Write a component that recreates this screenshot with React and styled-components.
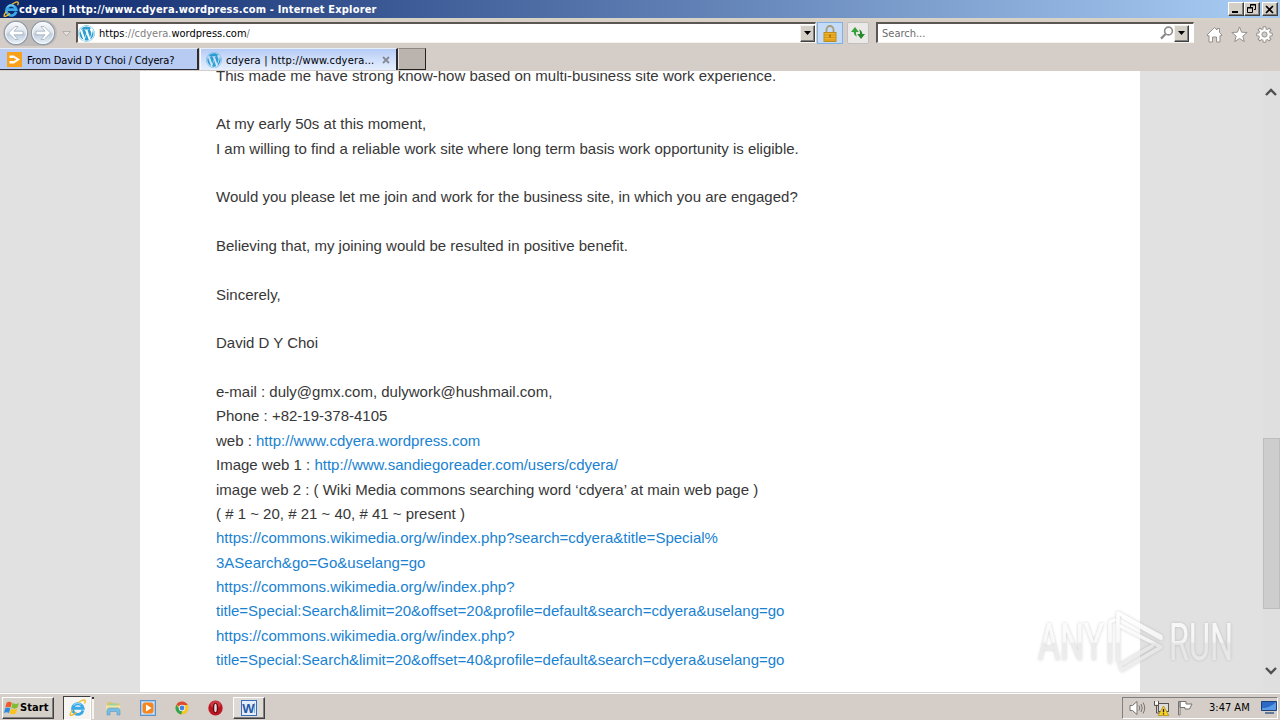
import React from "react";
import styled, { createGlobalStyle, css } from "styled-components";
import { FaWordpress } from "react-icons/fa";

const GlobalStyle = createGlobalStyle`
  * {
    box-sizing: border-box;
  }

  body {
    margin: 0;
    overflow: hidden;
    background: #d4d0c8;
  }

  svg {
    display: block;
    flex: none;
  }
`;

const uiFont = css`
  font-family: "DejaVu Sans Condensed", "DejaVu Sans", Tahoma, sans-serif;
  font-stretch: condensed;
  font-size: 11px;
  line-height: 14px;
  white-space: pre;
`;

const Desktop = styled.div`
  width: 1280px;
  height: 720px;
  display: flex;
  flex-direction: column;
  position: relative;
  overflow: hidden;
  background: #d4cdc8;
  color: #000;
`;

const Label = styled.span`
  ${uiFont}
  flex: none;
  font-weight: ${(p) => (p.$bold ? 700 : 400)};
  letter-spacing: ${(p) => p.$spacing || 0}px;
  color: ${(p) => p.$color || "#000"};
`;

/* Title bar */

const TitleBar = styled.header`
  height: 18px;
  flex: none;
  display: flex;
  align-items: center;
  padding: 0 2px 0 3px;
  background: linear-gradient(90deg, #0b266b 0%, #a3c7ef 96%);
`;

const TitleText = styled(Label)`
  padding-top: 1px;
  flex: 1;
`;

const WindowButton = styled.button`
  width: 16px;
  height: 14px;
  padding: 0;
  margin-left: ${(p) => p.$gap || 0}px;
  display: flex;
  align-items: center;
  justify-content: center;
  background: #d4d0c8;
  border: 1px solid;
  border-color: #fff #404040 #404040 #fff;
  box-shadow: inset -1px -1px 0 #808080;
`;

/* Navigation bar */

const NavBar = styled.nav`
  height: 30px;
  flex: none;
  display: flex;
  align-items: flex-start;
  padding: 2px 7px 0 3px;
  background: linear-gradient(#d8d3c6 0, #d4cdc8 5px);
`;

const HistoryButtons = styled.div`
  display: flex;
  width: 54px;
  height: 26px;
  border-radius: 13px;
  background: #bfbcba;
`;

const HistoryMenu = styled.div`
  width: 19px;
  height: 28px;
  display: flex;
  align-items: center;
  justify-content: center;
`;

const Field = styled.div`
  width: ${(p) => p.$width}px;
  height: 21px;
  margin: 2px 0 0 ${(p) => p.$left}px;
  display: flex;
  align-items: center;
  background: #fff;
  border: 1px solid;
  border-width: 2px 1px 1px 2px;
  border-color: #5c5752 #fff #f5f2ee #5c5752;
`;

const FieldText = styled.div`
  display: flex;
  flex: 1;
  margin-left: 4px;
  padding-top: 2px;
`;

const DropButton = styled.button`
  width: 15px;
  height: 17px;
  padding: 0;
  display: flex;
  align-items: center;
  justify-content: center;
  background: #d4d0c8;
  border: 1px solid;
  border-color: #f4f2ee #404040 #404040 #f4f2ee;
  box-shadow: inset -1px -1px 0 #808080;
`;

const AddressButton = styled.button`
  width: ${(p) => p.$width}px;
  height: 22px;
  padding: 0;
  margin: 2px 0 0 ${(p) => p.$left}px;
  display: flex;
  align-items: center;
  justify-content: center;
  border: 1px solid ${(p) => (p.$active ? "#7fb0e6" : "#c2c0be")};
  border-radius: ${(p) => (p.$active ? 0 : 2)}px;
  background: ${(p) => (p.$active ? "#c4dcf8" : "#ebe9e8")};
`;

const Tools = styled.div`
  display: flex;
  gap: 8px;
  margin: 6px 0 0 auto;
`;

/* Tabs */

const TabStrip = styled.div`
  height: 23px;
  flex: none;
  display: flex;
  align-items: flex-start;
`;

const Tab = styled.div`
  width: ${(p) => p.$width}px;
  height: 22px;
  margin-left: ${(p) => (p.$active ? 1 : 0)}px;
  display: flex;
  align-items: center;
  padding: 1px 6px 0 ${(p) => (p.$active ? 5 : 7)}px;
  border: solid #2b2b33;
  border-width: 0 2px ${(p) => (p.$active ? 0 : 1)}px 0;
  border-top: 1px solid #e8eef8;
  border-left: ${(p) => (p.$active ? "1px solid #f6f9ff" : 0)};
  background: ${(p) =>
    p.$active
      ? "linear-gradient(#b5cbf5 0, #c8d9f9 35%, #e6effe 100%)"
      : "#b8cbf3"};

  span {
    margin-left: ${(p) => (p.$active ? 4 : 5)}px;
    padding-top: 2px;
  }
`;

const CloseGlyph = styled.svg`
  margin-left: auto;
`;

const NewTab = styled.div`
  width: 28px;
  height: 22px;
  background: #bab3ae;
  border: 1px solid;
  border-color: #8f8984 #222 #222 #e6e0dc;
`;

/* Page */

const Viewport = styled.main`
  height: 621px;
  flex: none;
  display: flex;
  background: #e1e1e1;
  overflow: hidden;
`;

const Article = styled.article`
  width: 1000px;
  margin-left: 140px;
  padding: 0 340px 0 76px;
  background: #fff;
`;

const Letter = styled.div`
  margin-top: -7.33px;
  font-family: "Liberation Sans", Arial, sans-serif;
  font-size: 15px;
  line-height: 24.35px;
  color: #373737;
  white-space: pre;
`;

const Line = styled.div`
  height: 24.35px;
`;

const Link = styled.a`
  color: #1982d1;
`;

const ScrollTrack = styled.div`
  width: 17px;
  margin-left: auto;
  display: flex;
  flex-direction: column;
  align-items: center;
  background: #dfdfdf;
  padding: 17px 0 17px;
`;

const ScrollThumb = styled.div`
  width: 17px;
  height: 171px;
  margin: 342px 0 auto;
  background: #cdcdcd;
  border: 1px solid #bdbdbd;
`;

/* Taskbar */

const Taskbar = styled.footer`
  height: 28px;
  flex: none;
  display: flex;
  align-items: center;
  padding: 2px 0 0 2px;
  background: #d4cdc8;
  border-top: 1px solid #d9d4cf;
  box-shadow: inset 0 1px 0 #fff;
`;

const StartButton = styled.button`
  width: 52px;
  height: 22px;
  padding: 0 0 0 1px;
  display: flex;
  align-items: center;
  background: #d4d0c8;
  border: 1px solid;
  border-color: #fff #404040 #404040 #fff;
  box-shadow: inset -1px -1px 0 #808080;
`;

const QuickItem = styled.div`
  width: 33px;
  height: 24px;
  margin-right: 1px;
  display: flex;
  align-items: center;
  justify-content: center;
  border: 1px solid transparent;

  ${(p) =>
    p.$state === "pressed" &&
    css`
      width: 28px;
      margin: 0 5px 0 9px;
      background: #f6f5f2;
      border-color: #404040 #fff #fff #404040;
    `}

  ${(p) =>
    p.$state === "raised" &&
    css`
      width: 32px;
      height: 22px;
      background: #dedad5;
      border-color: #fff #404040 #404040 #fff;
      box-shadow: inset -1px -1px 0 #808080;
    `}
`;

const PressedEdge = styled.i`
  width: 2px;
  height: 22px;
  margin: 0 3px 0 -4px;
  background: #f6f5f2;
  border-top: 2px solid #333;
`;

const Tray = styled.div`
  height: 22px;
  margin-left: auto;
  width: 156px;
  margin-right: 2px;
  display: flex;
  align-items: center;
  padding-left: 6px;
  gap: 7px;
  border: 1px solid;
  border-color: #808080 #fff #fff #808080;
`;

const Clock = styled(Label)`
  margin: 0 auto 0 8px;
`;

const Watermark = styled.svg`
  position: absolute;
  left: 1028px;
  top: 602px;
  pointer-events: none;
`;

const Arrow = ({ color = "#000" }) => (
  <svg width="7" height="4" viewBox="0 0 7 4">
    <path d="M0 0h7L3.5 4z" fill={color} />
  </svg>
);

const Explorer = ({ size }) => (
  <svg width={size} height={size} viewBox="0 0 16 16" fill="none">
    <path
      d="M13.2 10.700A5 5 0 1 1 13.300 8.700H4.500"
      stroke="#39a9e8"
      strokeWidth="2.700"
    />
    <path d="M4.200 6.200a4.400 4.400 0 0 1 7-.9" stroke="#8cd8fb" strokeWidth="1" />
    <path
      d="M3.400 10.300C.6 14 .4 16 2.400 15.400c1.600-.4 3.300-1.700 4.600-2.800M9 3.300C12 1 14.700.2 15.200 1.400c.3.8-.1 1.800-.6 2.800"
      stroke="#f0bd2c"
      strokeWidth="1.300"
    />
  </svg>
);

const RoundArrow = ({ flip }) => (
  <svg width="27" height="26" viewBox="0 0 27 26">
    <defs>
      <linearGradient id="glass" x1="0" y1="0" x2="0" y2="1">
        <stop offset="0" stopColor="#fbfcfd" />
        <stop offset=".48" stopColor="#dce2ea" />
        <stop offset=".55" stopColor="#bfcddd" />
        <stop offset="1" stopColor="#edf5fb" />
      </linearGradient>
    </defs>
    <circle cx="13" cy="13" r="11.600" fill="url(#glass)" stroke="#929daa" strokeWidth="1.300" />
    <circle cx="13" cy="13" r="10.500" fill="none" stroke="#f7fafc" />
    <path
      transform={flip ? "translate(26 0) scale(-1 1)" : undefined}
      d="M5.500 13l6.500-6.500h3l-4 4.700h9v3.600h-9l4 4.700h-3z"
      fill="#fff"
      stroke="#9eaec0"
      strokeWidth=".8"
    />
  </svg>
);

const Lock = () => (
  <svg width="14" height="17" viewBox="0 0 14 17">
    <path d="M3.500 8V4.500a3.500 3.500 0 0 1 7 0V8" fill="none" stroke="#a79c78" strokeWidth="1.800" />
    <rect x="1" y="7.500" width="12" height="9" fill="#f0b323" stroke="#b98c22" />
    <path d="M1.500 10h11M1.500 12.500h11M1.500 15h11" stroke="#c98a16" strokeWidth=".8" />
    <path d="M7 9.500v3" stroke="#8a6212" strokeWidth="1.200" />
  </svg>
);

const Refresh = () => (
  <svg width="16" height="14" viewBox="0 0 16 14">
    <path d="M5 1L1 6h2.700c.2 2.500 1.300 4 3.500 4.500C6 9 5.900 7.600 6.100 6h2.700z" fill="#36a03b" />
    <path d="M11 13l4-5h-2.700c-.2-2.500-1.300-4-3.500-4.500C10 5 10.100 6.400 9.900 8H7.200z" fill="#278a2d" />
  </svg>
);

const Magnifier = () => (
  <svg width="14" height="14" viewBox="0 0 14 14" fill="none" stroke="#8d8a88">
    <circle cx="8.500" cy="5" r="3.900" strokeWidth="1.600" />
    <path d="M5.600 8L1 12.600" strokeWidth="2.300" />
  </svg>
);

const toolProps = {
  width: 17,
  height: 17,
  viewBox: "0 0 17 17",
  fill: "#fff",
  stroke: "#96918e",
  strokeLinejoin: "round",
};

const Home = () => (
  <svg {...toolProps}>
    <path d="M1 9l7.500-7.500L11 4V2.500h2.500v4L16 9l-1 1.300-1-.8V16h-3.500v-5h-4v5H3V9.500l-1 .8z" />
  </svg>
);

const Star = () => (
  <svg {...toolProps}>
    <path d="M8.500.9l2.100 5.300 5.600.3-4.400 3.600 1.500 5.500-4.800-3.100-4.800 3.100 1.500-5.500L.8 6.500l5.600-.3z" />
  </svg>
);

const teeth = [0, 45, 90, 135, 180, 225, 270, 315];

const Gear = () => (
  <svg {...toolProps}>
    {teeth.map((angle) => (
      <path
        key={angle}
        d="M6.800 4L7.200.7h2.600l.4 3.300"
        transform={`rotate(${angle} 8.500 8.500)`}
      />
    ))}
    <circle cx="8.500" cy="8.500" r="5.300" stroke="none" />
    <circle cx="8.500" cy="8.500" r="2.600" fill="#d4cdc8" />
  </svg>
);

const FeedLogo = () => (
  <svg width="15" height="15" viewBox="0 0 15 15">
    <rect width="15" height="15" fill="#f9a11b" />
    <path d="M2.500 3.500h4.300l6.200 4-6.200 4H2.500V9H6V6H2.500z" fill="#fff" />
    <path d="M6 5.500l3.500 2L6 9.500z" fill="#f9a11b" />
  </svg>
);

const WindowsFlag = () => (
  <svg width="16" height="16" viewBox="0 0 16 16">
    <path d="M2.600 2.700c2-1.300 3.500-1 5.200 0L6.500 7.400C4.700 6.500 3.300 6.300 1.300 7.500z" fill="#ef5a28" />
    <path d="M8.500 3.100c2 1.100 4.200 1.200 6.500-.2l-1.400 4.700c-2 1.400-4.200 1.300-6.300.2z" fill="#80bd35" />
    <path d="M1.100 8.300c2-1.200 3.400-1.100 5.200-.1L5 13c-1.800-1-3.300-1.100-5 .1z" fill="#2d8ce0" />
    <path d="M7 8.600c2 1.100 4 1.200 6.300-.1L12 13.200c-2.200 1.400-4.200 1.300-6.300.2z" fill="#fac21a" />
  </svg>
);

const FolderIcon = () => (
  <svg width="17" height="16" viewBox="0 0 17 16">
    <path d="M2 3l1-1h4l1 1.500h6.500V10H2z" fill="#dfc46c" />
    <path d="M4 3.500h8v3H4z" fill="#9bd2a1" />
    <path d="M1 5.500h14l.5 5H1z" fill="#f5e3a0" />
    <path d="M2 15v-4.500C2 9 3 8 4.500 8h8C14 8 15 9 15 10.500V15h-3v-3.500H5V15z" fill="#78bde2" stroke="#5b9cc5" strokeWidth=".6" />
  </svg>
);

const MediaIcon = () => (
  <svg width="16" height="16" viewBox="0 0 16 16">
    <rect x=".5" y=".5" width="15" height="15" fill="#a7c9ea" stroke="#5d91c8" />
    <rect x="2" y="2" width="12" height="12" fill="#cfe2f5" />
    <rect x="2.500" y="2.500" width="11" height="11" rx="3" fill="#f5851f" />
    <path d="M6 4.500L11.500 8 6 11.500z" fill="#fff" />
  </svg>
);

const ChromeIcon = () => (
  <svg width="14" height="14" viewBox="0 0 14 14">
    <circle cx="7" cy="7" r="6.500" fill="#f6c623" />
    <path d="M7 7L1.400 3.700A6.500 6.500 0 0 1 12.700 3.900H7z" fill="#de4837" />
    <path d="M1.400 3.700L5 9l2.500 0L6.200 13.450A6.500 6.500 0 0 1 1.400 3.700z" fill="#31a350" />
    <circle cx="7" cy="7" r="3.200" fill="#f3f3f3" />
    <circle cx="7" cy="7" r="2.400" fill="#4480e8" />
  </svg>
);

const OperaIcon = () => (
  <svg width="15" height="16" viewBox="0 0 15 16">
    <ellipse cx="7.500" cy="8" rx="7.200" ry="7.500" fill="#bd1622" />
    <ellipse cx="7.500" cy="4.500" rx="5.300" ry="3.500" fill="#d9505a" opacity=".6" />
    <ellipse cx="7.500" cy="8" rx="2.700" ry="5.300" fill="#5c0910" />
    <ellipse cx="7.500" cy="8" rx="1.300" ry="4.300" fill="#e9dcdc" />
  </svg>
);

const WordIcon = () => (
  <svg width="16" height="16" viewBox="0 0 16 16">
    <rect x=".5" y=".5" width="15" height="15" fill="#e4eefa" stroke="#3a6fb8" />
    <path d="M13.500 3v10" stroke="#8fb0dc" />
    <text
      x="7.500"
      y="12.500"
      fill="#2459a8"
      fontSize="13"
      fontWeight="700"
      fontFamily="Liberation Sans, sans-serif"
      textAnchor="middle"
    >
      W
    </text>
  </svg>
);

const Speaker = () => (
  <svg width="17" height="16" viewBox="0 0 17 16" fill="none" stroke="#77736f">
    <path d="M1 5.500h2.500L8 1.500v13l-4.500-4H1z" fill="#fff" />
    <path d="M10 5.500q1.600 2.500 0 5M12 4q2.500 4 0 8M14 2.500q3.400 5.500 0 11" />
  </svg>
);

const Network = () => (
  <svg width="17" height="16" viewBox="0 0 17 16">
    <rect x="5.500" y="3.500" width="10" height="8" fill="#dedcd8" stroke="#56534f" />
    <path d="M1.500 1v4.500h4V1M3.500 5.500V13H8" fill="none" stroke="#56534f" />
    <path d="M2 1.500h3v3H2z" fill="#fff" />
    <path d="M10.500 6l5.300 9.500H5.200z" fill="#f9d423" stroke="#a98712" strokeWidth=".7" />
    <path d="M10.500 9v3.300M10.500 13.300v1.200" stroke="#222" strokeWidth="1.300" />
  </svg>
);

const Flag = () => (
  <svg width="17" height="16" viewBox="0 0 17 16" fill="#fff" stroke="#77736f">
    <path d="M1.500 1.500H3V15H1.500zM3 1.500h6V4h6l-2.500 5H8V7.500H3z" />
  </svg>
);

const DesktopIcon = () => (
  <svg width="16" height="13" viewBox="0 0 16 13">
    <path d="M.5.5h15v9h-15z" fill="#2a69c4" stroke="#1d3f7a" />
    <path d="M1 7C6 7 11 5 15 1v8H1z" fill="#5d9ae6" />
    <path d="M4 12h9" stroke="#3b5c8c" strokeWidth="1.500" />
  </svg>
);

const Chevron = ({ down }) => (
  <svg width="13" height="8" viewBox="0 0 13 8">
    <path
      d={down ? "M1 1l5 5 5-5" : "M1 7l5-5 5 5"}
      fill="none"
      stroke="#505050"
      strokeWidth="2.400"
    />
  </svg>
);

const letter = [
  ["This made me have strong know-how based on multi-business site work experience."],
  [],
  ["At my early 50s at this moment,"],
  ["I am willing to find a reliable work site where long term basis work opportunity is eligible."],
  [],
  ["Would you please let me join and work for the business site, in which you are engaged?"],
  [],
  ["Believing that, my joining would be resulted in positive benefit."],
  [],
  ["Sincerely,"],
  [],
  ["David D Y Choi"],
  [],
  ["e-mail : duly@gmx.com, dulywork@hushmail.com,"],
  ["Phone : +82-19-378-4105"],
  ["web : ", "http://www.cdyera.wordpress.com"],
  ["Image web 1 : ", "http://www.sandiegoreader.com/users/cdyera/"],
  ["image web 2 : ( Wiki Media commons searching word ‘cdyera’ at main web page )"],
  ["( # 1 ~ 20, # 21 ~ 40, # 41 ~ present )"],
  ["", "https://commons.wikimedia.org/w/index.php?search=cdyera&title=Special%"],
  ["", "3ASearch&go=Go&uselang=go"],
  ["", "https://commons.wikimedia.org/w/index.php?"],
  ["", "title=Special:Search&limit=20&offset=20&profile=default&search=cdyera&uselang=go"],
  ["", "https://commons.wikimedia.org/w/index.php?"],
  ["", "title=Special:Search&limit=20&offset=40&profile=default&search=cdyera&uselang=go"],
];

export default function App() {
  return (
    <Desktop>
      <GlobalStyle />

      <TitleBar>
        <Explorer size={16} />
        <TitleText $bold $color="#fff" $spacing={0.18}>
          cdyera | http://www.cdyera.wordpress.com - Internet Explorer
        </TitleText>
        <WindowButton>
          <svg width="12" height="10" viewBox="0 0 12 10">
            <path d="M2 8h6" stroke="#000" strokeWidth="2" />
          </svg>
        </WindowButton>
        <WindowButton>
          <svg width="12" height="10" viewBox="0 0 12 10" fill="none" stroke="#000">
            <path d="M4.500 3V.5h5v5H8M4 1h6M1.500 3.500h5v5h-5zM1 4h6" />
          </svg>
        </WindowButton>
        <WindowButton $gap={2}>
          <svg width="10" height="9" viewBox="0 0 10 9">
            <path d="M1 1l7 7M8 1L1 8" stroke="#000" strokeWidth="1.700" />
          </svg>
        </WindowButton>
      </TitleBar>

      <NavBar>
        <HistoryButtons>
          <RoundArrow />
          <RoundArrow flip />
        </HistoryButtons>
        <HistoryMenu>
          <svg width="9" height="6" viewBox="0 0 9 6">
            <path d="M.5.5h8l-4 4.500z" fill="#e6e2df" stroke="#b4afab" />
          </svg>
        </HistoryMenu>

        <Field $width={740} $left={0}>
          <FaWordpress size={17} color="#2a9fd0" />
          <FieldText>
            <Label>https</Label>
            <Label $color="#808080">://cdyera.</Label>
            <Label>wordpress.com</Label>
            <Label $color="#808080">/</Label>
          </FieldText>
          <DropButton>
            <Arrow />
          </DropButton>
        </Field>
        <AddressButton $width={26} $left={1} $active>
          <Lock />
        </AddressButton>
        <AddressButton $width={22} $left={4}>
          <Refresh />
        </AddressButton>

        <Field $width={318} $left={7}>
          <FieldText>
            <Label $color="#6d6d6d">Search...</Label>
          </FieldText>
          <Magnifier />
          <DropButton>
            <Arrow />
          </DropButton>
          <svg width="4" height="16" />
        </Field>

        <Tools>
          <Home />
          <Star />
          <Gear />
        </Tools>
      </NavBar>

      <TabStrip>
        <Tab $width={199}>
          <FeedLogo />
          <Label $spacing={-0.14}>From David D Y Choi / Cdyera?</Label>
        </Tab>
        <Tab $width={198} $active>
          <FaWordpress size={16} color="#2a9fd0" />
          <Label $spacing={0.17}>cdyera | http://www.cdyera...</Label>
          <CloseGlyph width="8" height="8" viewBox="0 0 8 8">
            <path d="M1 1l6 6M7 1L1 7" stroke="#858a96" strokeWidth="1.800" />
          </CloseGlyph>
        </Tab>
        <NewTab />
      </TabStrip>

      <Viewport>
        <Article>
          <Letter>
            {letter.map(([text, link], index) => (
              <Line key={index}>
                {text}
                {link && <Link>{link}</Link>}
              </Line>
            ))}
          </Letter>
        </Article>
        <ScrollTrack>
          <Chevron />
          <ScrollThumb />
          <Chevron down />
        </ScrollTrack>
      </Viewport>

      <Taskbar>
        <StartButton>
          <WindowsFlag />
          <Label $bold $spacing={0.1}>Start</Label>
        </StartButton>
        <QuickItem $state="pressed">
          <Explorer size={17} />
        </QuickItem>
        <PressedEdge />
        <QuickItem>
          <FolderIcon />
        </QuickItem>
        <QuickItem>
          <MediaIcon />
        </QuickItem>
        <QuickItem>
          <ChromeIcon />
        </QuickItem>
        <QuickItem>
          <OperaIcon />
        </QuickItem>
        <QuickItem $state="raised">
          <WordIcon />
        </QuickItem>
        <Tray>
          <Speaker />
          <Network />
          <Flag />
          <Clock>3:47 AM</Clock>
          <DesktopIcon />
        </Tray>
      </Taskbar>

      <Watermark width="240" height="84" viewBox="0 0 240 84">
        <defs>
          <filter id="glow" x="-10%" y="-20%" width="120%" height="140%">
            <feDropShadow dx="0" dy="0" stdDeviation="1.800" floodColor="#888" floodOpacity=".5" />
          </filter>
          <linearGradient id="fade" gradientUnits="userSpaceOnUse" x1="0" y1="10" x2="0" y2="70">
            <stop offset="0" stopColor="#fff" />
            <stop offset=".5" stopColor="#f8f8f8" />
            <stop offset=".52" stopColor="#e8e8e8" />
            <stop offset="1" stopColor="#ebebeb" />
          </linearGradient>
        </defs>
        <g
          filter="url(#glow)"
          fill="url(#fade)"
          fontFamily="Roboto, Liberation Sans, sans-serif"
          fontSize="51"
          opacity=".85"
        >
          <text x="10" y="58" textLength="66" lengthAdjust="spacingAndGlyphs">
            ANY
          </text>
          <text x="141" y="58" textLength="64" lengthAdjust="spacingAndGlyphs">
            RUN
          </text>
          <g fill="none" stroke="url(#fade)" strokeWidth="3.500" strokeLinejoin="round" strokeLinecap="round">
            <path d="M82 60V20l4-2" />
            <path d="M90 59V11l43 23.500v2L95 15" />
            <path d="M92 24l41 21-39 23-2-5 32-19" />
          </g>
        </g>
      </Watermark>
    </Desktop>
  );
}
